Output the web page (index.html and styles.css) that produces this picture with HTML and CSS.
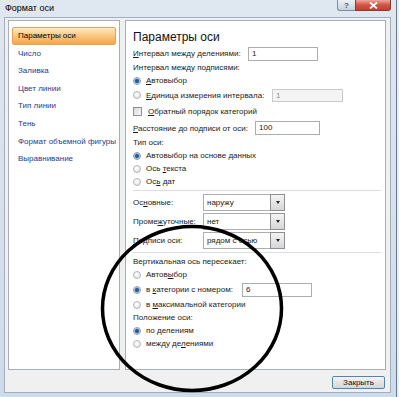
FILE: index.html
```html
<!DOCTYPE html>
<html lang="ru">
<head>
    <meta charset="UTF-8">
    <title>Формат оси</title>
    <link rel="stylesheet" href="styles.css">
</head>
<body>
    <div class="window">
        <div class="titlebar">
            <span class="title">Формат оси</span>
            <div class="caption-buttons">
                <span class="cap-btn help">?</span>
                <span class="cap-btn close">
                    <svg width="9" height="7" viewBox="0 0 9 7"><path d="M1 0.5 L8 6.5 M8 0.5 L1 6.5" stroke="#fff" stroke-width="1.8"/></svg>
                </span>
            </div>
        </div>

        <div class="client">
            <div class="panes">
                <!-- left list of sections -->
                <ul class="nav">
                    <li class="active">Параметры оси</li>
                    <li>Число</li>
                    <li>Заливка</li>
                    <li>Цвет линии</li>
                    <li>Тип линии</li>
                    <li>Тень</li>
                    <li>Формат объемной фигуры</li>
                    <li>Выравнивание</li>
                </ul>

                <div class="content">
                    <h1>Параметры оси</h1>

                    <div class="row row-field first">
                        <span class="label label-interval"><u>И</u>нтервал между делениями:</span>
                        <span class="field field-short">1</span>
                    </div>
                    <div class="row"><span>Интервал между подписями:</span></div>
                    <div class="row"><span class="radio on"></span><span><u>А</u>втовыбор</span></div>
                    <div class="row row-field">
                        <span class="radio"></span>
                        <span class="label label-unit"><u>Е</u>диница измерения интервала:</span>
                        <span class="field off">1</span>
                    </div>
                    <div class="row row-check"><span class="check"></span><span><u>О</u>братный порядок категорий</span></div>
                    <div class="row row-field">
                        <span class="label label-distance"><u>Р</u>асстояние до подписи от оси:</span>
                        <span class="field field-distance">100</span>
                    </div>
                    <div class="row"><span>Тип оси:</span></div>
                    <div class="row"><span class="radio on"></span><span>Автовыбор на основе данных</span></div>
                    <div class="row"><span class="radio"></span><span>Ось <u>т</u>екста</span></div>
                    <div class="row"><span class="radio"></span><span>Ос<u>ь</u> дат</span></div>

                    <div class="sep"></div>

                    <div class="row row-select">
                        <span class="label label-select">Ос<u>н</u>овные:</span>
                        <span class="select"><span class="select-value">наружу</span><span class="select-arrow"></span></span>
                    </div>
                    <div class="row row-select">
                        <span class="label label-select">Проме<u>ж</u>уточные:</span>
                        <span class="select"><span class="select-value">нет</span><span class="select-arrow"></span></span>
                    </div>
                    <div class="row row-select">
                        <span class="label label-select"><u>П</u>одписи оси:</span>
                        <span class="select"><span class="select-value">рядом с осью</span><span class="select-arrow"></span></span>
                    </div>

                    <div class="sep"></div>

                    <div class="row"><span>Вертикальная ось пересекает:</span></div>
                    <div class="row"><span class="radio"></span><span>Автов<u>ы</u>бор</span></div>
                    <div class="row row-field wide">
                        <span class="radio on"></span>
                        <span class="label label-category">в <u>к</u>атегории с номером:</span>
                        <span class="field field-short">6</span>
                    </div>
                    <div class="row"><span class="radio"></span><span>в <u>м</u>аксимальной категории</span></div>
                    <div class="row"><span>Положение оси:</span></div>
                    <div class="row"><span class="radio on"></span><span>по <u>д</u>елениям</span></div>
                    <div class="row"><span class="radio"></span><span>между де<u>л</u>ениями</span></div>
                </div>
            </div>

            <div class="footer">
                <button class="btn">Закрыть</button>
            </div>
        </div>

        <!-- hand drawn marker over the dialog -->
        <svg class="marker" width="399" height="397" viewBox="0 0 399 397">
            <ellipse cx="192" cy="308.5" rx="89.5" ry="82" fill="none" stroke="#000" stroke-width="3.5"/>
        </svg>
    </div>
</body>
</html>
```

FILE: styles.css
```css
body {
    margin: 0;
    background: #e6edf5;
    font-family: "Liberation Sans", Arial, sans-serif;
    font-size: 8px;
    color: #1b1b1b;
}
.window {
    position: relative;
    width: 397px;
    height: 397px;
    box-sizing: border-box;
    padding: 0 5px 4px 4px;
    background: linear-gradient(#dfe7f0, #cddbea);
    border-right: 1px solid #6b7a8c;
    display: flex;
    flex-direction: column;
}
.titlebar {
    height: 17px;
    flex-shrink: 0;
    display: flex;
    align-items: flex-start;
    justify-content: space-between;
}
.title {
    font-size: 9px;
    line-height: 17px;
    padding-left: 1px;
    color: #000;
}
.caption-buttons {
    display: flex;
}
.cap-btn {
    height: 11px;
    box-sizing: border-box;
    display: flex;
    align-items: center;
    justify-content: center;
    border: 1px solid #7d8ca1;
    border-top: none;
}
.help {
    width: 18px;
    border-right: none;
    border-radius: 0 0 0 3px;
    background: linear-gradient(#edf1f6, #c5d1df);
    color: #4f5b6b;
    font-size: 8px;
    font-weight: bold;
}
.close {
    width: 36px;
    border-color: #8b3a32;
    border-radius: 0 0 3px 0;
    background: linear-gradient(#e9a99d, #cf5443 50%, #c4402f);
}
.client {
    flex: 1;
    display: flex;
    flex-direction: column;
    background: #f0f0f0;
    border: 1px solid #9fb0c4;
    padding: 2px 4px 3px 3px;
}
.panes {
    display: flex;
    gap: 5px;
    height: 350px;
}
.nav {
    width: 112px;
    box-sizing: border-box;
    margin: 0;
    padding: 6px 3px 0 3px;
    list-style: none;
    background: #fff;
    border: 1px solid #a7aeb7;
}
.nav li {
    height: 17.6px;
    line-height: 17.6px;
    padding-left: 6px;
    box-sizing: border-box;
    color: #283a8e;
    white-space: nowrap;
}
.nav li.active {
    color: #000;
    line-height: 15.6px;
    padding-left: 5px;
    border: 1px solid #e4a453;
    border-radius: 2px;
    background: linear-gradient(#fde9c6, #fbc986 45%, #f5a647);
}
.content {
    flex: 1;
    display: flex;
    flex-direction: column;
    background: #fff;
    border: 1px solid #a7aeb7;
    padding: 7px 4px 0 7px;
}
.content h1 {
    margin: 0;
    height: 18px;
    line-height: 18px;
    font-size: 12px;
    font-weight: normal;
    color: #111;
}
.row {
    display: flex;
    align-items: center;
    height: 13px;
    flex-shrink: 0;
    white-space: nowrap;
}
.row-field {
    height: 16px;
}
.row-field.first {
    height: 15px;
}
.row-field.wide {
    height: 17px;
}
.row-check {
    height: 17px;
}
.row-select {
    height: 19px;
}
.label {
    flex-shrink: 0;
}
.label-interval {
    width: 115px;
}
.label-unit {
    width: 126px;
}
.label-distance {
    width: 122px;
}
.label-select {
    width: 70px;
}
.label-category {
    width: 96px;
}
.radio {
    width: 8px;
    height: 8px;
    box-sizing: border-box;
    border-radius: 50%;
    border: 1px solid #b0b4b9;
    background: radial-gradient(circle at 40% 35%, #fff, #dfe0e2);
    margin-right: 5px;
    flex-shrink: 0;
}
.radio.on {
    border-color: #8c9db2;
    background: radial-gradient(circle, #2a5b95 0 1.5px, #86a5cb 2.3px, #eef2f7 3.1px);
}
.check {
    width: 9px;
    height: 9px;
    box-sizing: border-box;
    border: 1px solid #8e8f8f;
    background: linear-gradient(135deg, #d8d8d8, #fafafa);
    margin-right: 6px;
    flex-shrink: 0;
}
.field {
    width: 71px;
    height: 14px;
    box-sizing: border-box;
    padding-left: 3px;
    line-height: 12px;
    border: 1px solid #abadb3;
    background: #fff;
}
.field-short {
    width: 70px;
}
.field-distance {
    width: 65px;
}
.field.off {
    height: 13px;
    line-height: 11px;
    color: #8d8d8d;
    background: #f4f4f4;
    border-color: #c9cacc;
}
.select {
    display: flex;
    width: 82px;
    height: 17px;
    box-sizing: border-box;
    border: 1px solid #abadb3;
    background: #fff;
}
.select-value {
    flex: 1;
    padding-left: 3px;
    line-height: 15px;
}
.select-arrow {
    width: 13px;
    display: flex;
    align-items: center;
    justify-content: center;
    border: 1px solid #8f8f8f;
    margin: -1px -1px -1px 0;
    background: linear-gradient(#f4f4f4, #d6d6d6);
}
.select-arrow::after {
    content: "";
    border-left: 2.5px solid transparent;
    border-right: 2.5px solid transparent;
    border-top: 3px solid #222;
}
.sep {
    height: 0;
    border-top: 1px solid #d9dee4;
    margin: 2px 0 2px 0;
    flex-shrink: 0;
}
.footer {
    display: flex;
    justify-content: flex-end;
    padding-top: 6px;
}
.btn {
    width: 53px;
    height: 13px;
    padding: 0;
    margin-right: 1px;
    font-family: inherit;
    font-size: 8px;
    color: #111;
    border: 1px solid #4a86b8;
    border-radius: 2px;
    background: linear-gradient(#f6f6f6, #e3e3e3 50%, #d6d6d6);
}
.marker {
    position: absolute;
    left: 0;
    top: 0;
    pointer-events: none;
}
```
